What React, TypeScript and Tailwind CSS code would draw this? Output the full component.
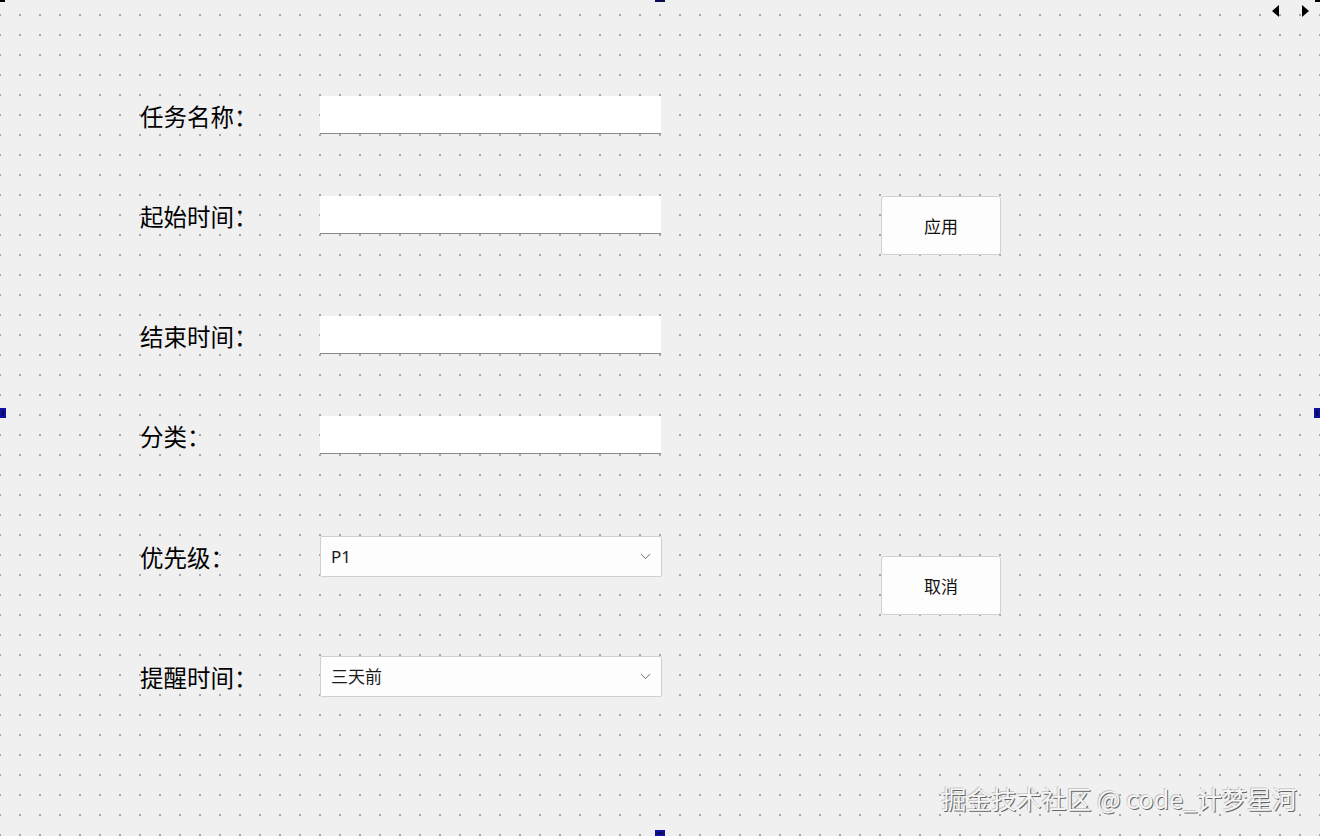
import { ChevronDown } from 'lucide-react';

const cjk = "font-['Microsoft_YaHei','Noto_Sans_CJK_SC',sans-serif]";

function LineEdit() {
  return <div className="h-[38px] w-[341px] bg-white border-b border-[#8a8a8a]" />;
}

function Combo({ value }: { value: string }) {
  return (
    <div className="h-[41px] w-[342px] flex items-center justify-between pl-[10px] pr-[7px] bg-[#fdfdfd] border border-[#d0d0d0] rounded-[2px]">
      <span className={`text-[17px] text-[#1a1a1a] font-['Segoe_UI','Noto_Sans','Noto_Sans_CJK_SC',sans-serif]`}>{value}</span>
      <ChevronDown size={17} strokeWidth={1.1} className="text-[#444]" />
    </div>
  );
}

function Row({ label, className, children }: { label: string; className: string; children: React.ReactNode }) {
  return (
    <div className={`flex items-center ${className}`}>
      <div className={`w-[180px] pt-[3px] text-[23.5px] text-black leading-none ${cjk}`}>{label}</div>
      {children}
    </div>
  );
}

function Btn({ text, className }: { text: string; className?: string }) {
  return (
    <button className={`h-[59px] w-[120px] bg-[#fdfdfd] border border-[#d0d0d0] rounded-[3px] text-[17px] text-[#111] ${cjk} ${className ?? ''}`}>
      {text}
    </button>
  );
}

export default function App() {
  return (
    <div className="relative h-[836px] w-[1320px] overflow-hidden bg-[#f0f0f0]">
      {/* designer grid */}
      <svg className="absolute inset-0" width="1320" height="836">
        <defs>
          <pattern id="dots" width="20" height="20" patternUnits="userSpaceOnUse" x="-1" y="-6">
            <rect x="0" y="0" width="2" height="2" fill="#a8a8a8" />
          </pattern>
        </defs>
        <rect width="1320" height="836" fill="url(#dots)" />
      </svg>

      <div className="relative flex pl-[140px]">
        <div className="flex flex-col">
          <Row label="任务名称：" className="mt-[96px]"><LineEdit /></Row>
          <Row label="起始时间：" className="mt-[62px]"><LineEdit /></Row>
          <Row label="结束时间：" className="mt-[82px]"><LineEdit /></Row>
          <Row label="分类：" className="mt-[62px]"><LineEdit /></Row>
          <Row label="优先级：" className="mt-[82px]"><Combo value="P1" /></Row>
          <Row label="提醒时间：" className="mt-[79px]"><Combo value="三天前" /></Row>
        </div>
        <div className="ml-[219px] pt-[196px] flex flex-col">
          <Btn text="应用" />
          <Btn text="取消" className="mt-[301px]" />
        </div>
      </div>

      {/* selection handles */}
      <div className="absolute left-0 top-0 h-[2px] w-[5px] bg-black" />
      <div className="absolute right-0 top-0 h-[2px] w-[5px] bg-black" />
      <div className="absolute left-[655px] top-0 h-[2px] w-[10px] bg-[#0b0b55]" />
      <div className="absolute left-[655px] bottom-0 h-[6px] w-[10px] bg-[#0b0b55] border-2 border-[#1010a0]" />
      <div className="absolute left-0 top-[408px] h-[10px] w-[6px] bg-[#0b0b55] border-2 border-[#1010a0]" />
      <div className="absolute right-0 top-[408px] h-[10px] w-[6px] bg-[#0b0b55] border-2 border-[#1010a0]" />

      <svg className="absolute left-[1270px] top-[3px]" width="40" height="16" viewBox="0 0 40 16">
        <polygon points="9,2 2,8 9,14" fill="#000" />
        <polygon points="32,2 39,8 32,14" fill="#000" />
      </svg>

      <div
        className={`absolute right-[23px] bottom-[25px] text-[25px] leading-none text-[#f6f6f6] [text-shadow:1px_1px_0_#666,-1px_-1px_0_#c8c8c8] ${cjk}`}
      >
        掘金技术社区 @ code_计梦星河
      </div>
    </div>
  );
}
